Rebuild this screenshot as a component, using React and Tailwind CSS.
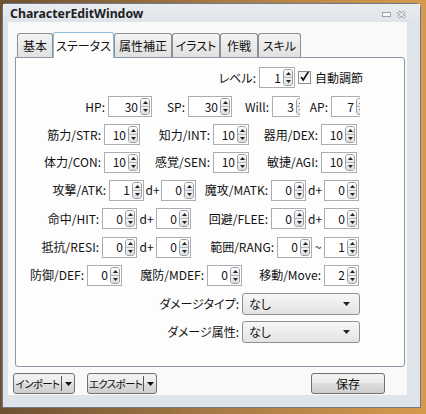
import React from 'react';

const jp = "font-['Noto_Sans_CJK_JP',sans-serif] [font-feature-settings:'palt']";

// small up/down buttons inside a spin box
function UpDown({ clip }) {
  return (
    <div className={`flex h-[17px] w-[10px] shrink-0 flex-col overflow-hidden rounded-[3px] border border-[#9aa0a6] ${clip ? 'mr-[-6px]' : ''}`}>
      <div className="flex flex-1 items-center justify-center border-b border-[#b4b9be] bg-gradient-to-b from-[#fdfdfd] to-[#e6e6e6]">
        <svg width="5" height="3" viewBox="0 0 5 3"><path d="M2.5 0L5 3H0z" fill="#222" /></svg>
      </div>
      <div className="flex flex-1 items-center justify-center bg-gradient-to-b from-[#f3f3f3] to-[#dadada]">
        <svg width="5" height="3" viewBox="0 0 5 3"><path d="M0 0H5L2.5 3z" fill="#222" /></svg>
      </div>
    </div>
  );
}

function Spin({ value, w, clip }) {
  return (
    <div className={`flex h-[21px] shrink-0 items-center overflow-hidden border border-[#abadb3] bg-white ${clip ? 'border-r-0' : 'pr-[1px]'} ${w}`}>
      <span className="min-w-0 flex-1 pr-[2px] text-right leading-none">{value}</span>
      <UpDown clip={clip} />
    </div>
  );
}

function Label({ w, children }) {
  return <div className={`flex shrink-0 justify-end whitespace-nowrap pr-[3px] ${w}`}>{children}</div>;
}

function Mid({ w, children }) {
  return <div className={`flex shrink-0 justify-center ${w}`}>{children}</div>;
}

function Select({ value }) {
  return (
    <div className="flex h-[22px] w-[118px] shrink-0 items-center justify-between rounded-[3px] border border-[#8e8f8f] bg-gradient-to-b from-[#f7f7f7] to-[#e3e3e3] pl-[6px] pr-[9px]">
      <span>{value}</span>
      <svg width="7" height="4" viewBox="0 0 7 4"><path d="M0 0H7L3.5 4z" fill="#222" /></svg>
    </div>
  );
}

const btn = 'flex h-[21px] items-center rounded-[3px] border border-[#707070] bg-[linear-gradient(#f2f2f2,#ebebeb_50%,#dddddd_50%,#cfcfcf)]';

function SplitButton({ label, w }) {
  return (
    <div className={`${btn} ${w} pl-[1px]`}>
      <span className="flex-1 whitespace-nowrap pr-[1px] text-center text-[10.5px] tracking-[-0.7px]">{label}</span>
      <div className="h-[15px] w-px bg-[#555]" />
      <div className="flex w-[12px] justify-center">
        <svg width="7" height="4" viewBox="0 0 7 4"><path d="M0 0H7L3.5 4z" fill="#111" /></svg>
      </div>
    </div>
  );
}

export default function App() {
  const tabs = [
    { name: '基本', w: 'w-[36px]' },
    { name: 'ステータス', w: 'w-[61px]', active: true },
    { name: '属性補正', w: 'w-[58px]' },
    { name: 'イラスト', w: 'w-[48px]' },
    { name: '作戦', w: 'w-[38px]' },
    { name: 'スキル', w: 'w-[43px]' },
  ];

  return (
    <div className="h-[414px] w-[426px] overflow-hidden bg-gradient-to-r from-[#6e5132] via-[#a57a45] to-[#d69a4c] pl-[2px] pt-[3px]">
      <div className="flex h-[405px] w-[419px] flex-col rounded-t-[5px] border border-[#6f7883] bg-[#dfe4ea]">
        {/* title bar */}
        <div className="flex h-[18px] shrink-0 items-center justify-between bg-gradient-to-b from-[#e9edf1] to-[#dfe4ea] pl-[7px] pr-[13px] pt-[2px]">
          <span className="font-['Noto_Sans',sans-serif] text-[12.3px] font-bold leading-none text-[#1e1e1e]">CharacterEditWindow</span>
          <div className="flex items-center gap-[5px]">
            <svg width="9" height="5" viewBox="0 0 9 5"><rect x="0.5" y="0.5" width="8" height="4" fill="#f4f6f8" stroke="#9aa1a8" /></svg>
            <svg width="11" height="9" viewBox="0 0 11 9">
              <path d="M2 1.5L9 7.5M9 1.5L2 7.5" stroke="#9aa1a8" strokeWidth="3.2" />
              <path d="M2 1.5L9 7.5M9 1.5L2 7.5" stroke="#f4f6f8" strokeWidth="1.3" />
            </svg>
          </div>
        </div>

        {/* client area */}
        <div className={`ml-[5px] flex h-[373px] w-[399px] flex-col bg-[#f9f9f9] pt-[10px] text-[12px] text-[#111] ${jp}`}>
          <div className="ml-[9px] flex items-end">
            {tabs.map((t) =>
              t.active ? (
                <div key={t.name} className={`relative z-10 -mb-px flex h-[26px] items-center justify-center rounded-t-[3px] border border-b-0 border-[#8fbcd6] bg-[#fdfdfd] ${t.w}`}>
                  {t.name}
                </div>
              ) : (
                <div key={t.name} className={`flex h-[24px] items-center justify-center rounded-t-[3px] border border-b-0 border-[#8a8e95] bg-gradient-to-b from-[#f3f3f3] to-[#e1e1e1] ${t.w}`}>
                  {t.name}
                </div>
              )
            )}
          </div>

          <div className="ml-[7px] flex h-[310px] w-[390px] flex-col rounded-b-[3px] rounded-tr-[3px] border border-[#8c99a5] bg-[#fdfdfd] pt-[5px]">
            <div className="flex h-[29px] items-center">
              <Label w="w-[243px]">レベル:</Label>
              <Spin w="w-[36px]" value="1" />
              <div className="ml-[3px] flex h-[13px] w-[13px] items-center justify-center border border-[#8e8f8f] bg-gradient-to-b from-[#f0f0f0] to-[#fdfdfd]">
                <svg width="13" height="13" viewBox="0 0 13 13" className="-mt-[2px]">
                  <path d="M2.5 7L5 10.5L11 1" fill="none" stroke="#111" strokeWidth="2" />
                </svg>
              </div>
              <span className="ml-[4px]">自動調節</span>
            </div>

            <div className="flex h-[29px] items-center">
              <Label w="w-[92px]">HP:</Label>
              <Spin w="w-[44px]" value="30" />
              <Label w="w-[36px]">SP:</Label>
              <Spin w="w-[44px]" value="30" />
              <Label w="w-[40px]">Will:</Label>
              <Spin w="w-[28px]" value="3" clip />
              <Label w="w-[31px]">AP:</Label>
              <Spin w="w-[29px]" value="7" clip />
            </div>

            <div className="flex h-[27px] items-center">
              <Label w="w-[88px]">筋力/STR:</Label>
              <Spin w="w-[36px]" value="10" />
              <Label w="w-[73px]">知力/INT:</Label>
              <Spin w="w-[36px]" value="10" />
              <Label w="w-[72px]">器用/DEX:</Label>
              <Spin w="w-[36px]" value="10" />
            </div>

            <div className="flex h-[28px] items-center">
              <Label w="w-[88px]">体力/CON:</Label>
              <Spin w="w-[36px]" value="10" />
              <Label w="w-[73px]">感覚/SEN:</Label>
              <Spin w="w-[36px]" value="10" />
              <Label w="w-[72px]">敏捷/AGI:</Label>
              <Spin w="w-[36px]" value="10" />
            </div>

            <div className="flex h-[28px] items-center">
              <Label w="w-[93px]">攻撃/ATK:</Label>
              <Spin w="w-[35px]" value="1" />
              <Mid w="w-[17px]">d+</Mid>
              <Spin w="w-[35px]" value="0" />
              <Label w="w-[75px]">魔攻/MATK:</Label>
              <Spin w="w-[35px]" value="0" />
              <Mid w="w-[18px]">d+</Mid>
              <Spin w="w-[35px]" value="0" />
            </div>

            <div className="flex h-[29px] items-center">
              <Label w="w-[86px]">命中/HIT:</Label>
              <Spin w="w-[35px]" value="0" />
              <Mid w="w-[19px]">d+</Mid>
              <Spin w="w-[35px]" value="0" />
              <Label w="w-[80px]">回避/FLEE:</Label>
              <Spin w="w-[35px]" value="0" />
              <Mid w="w-[18px]">d+</Mid>
              <Spin w="w-[35px]" value="0" />
            </div>

            <div className="flex h-[28px] items-center">
              <Label w="w-[86px]">抵抗/RESI:</Label>
              <Spin w="w-[35px]" value="0" />
              <Mid w="w-[19px]">d+</Mid>
              <Spin w="w-[35px]" value="0" />
              <Label w="w-[86px]">範囲/RANG:</Label>
              <Spin w="w-[35px]" value="0" />
              <Mid w="w-[12px]">~</Mid>
              <Spin w="w-[35px]" value="1" />
            </div>

            <div className="flex h-[28px] items-center">
              <Label w="w-[71px]">防御/DEF:</Label>
              <Spin w="w-[35px]" value="0" />
              <Label w="w-[85px]">魔防/MDEF:</Label>
              <Spin w="w-[35px]" value="0" />
              <Label w="w-[82px]">移動/Move:</Label>
              <Spin w="w-[35px]" value="2" />
            </div>

            <div className="flex h-[29px] items-center">
              <Label w="w-[226px]">ダメージタイプ:</Label>
              <Select value="なし" />
            </div>

            <div className="flex h-[28px] items-center">
              <Label w="w-[226px]">ダメージ属性:</Label>
              <Select value="なし" />
            </div>
          </div>

          <div className="mt-[6px] flex items-center pl-[5px] pr-[22px]">
            <SplitButton label="インポート" w="w-[62px]" />
            <div className="ml-[12px]">
              <SplitButton label="エクスポート" w="w-[70px]" />
            </div>
            <div className={`${btn} ml-auto w-[74px] justify-center`}>保存</div>
          </div>
        </div>
      </div>
    </div>
  );
}
